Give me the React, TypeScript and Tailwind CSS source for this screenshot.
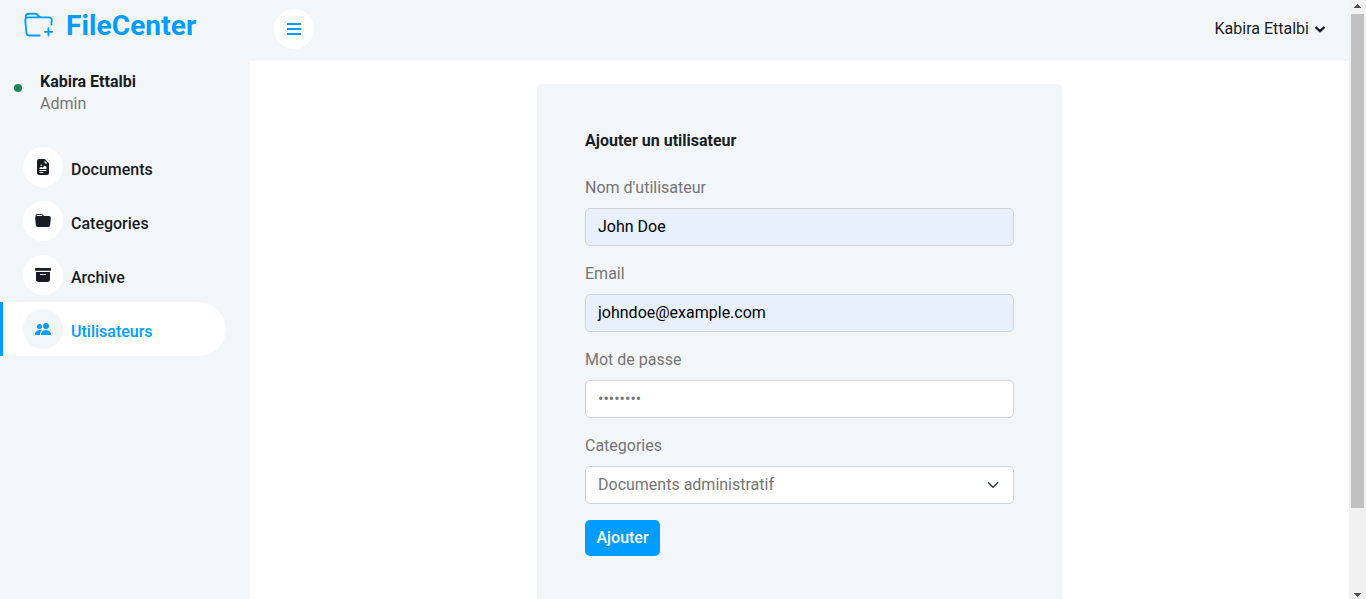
import type { ReactNode } from 'react';
import { BsArchiveFill, BsFileEarmarkRichtextFill, BsFolderFill, BsFolderPlus } from 'react-icons/bs';

function PeopleIcon() {
  return (
    <svg className="size-4" viewBox="0 0 16 16" fill="currentColor">
      <path d="M7 14s-1 0-1-1 1-4 5-4 5 3 5 4-1 1-1 1H7zm4-6a3 3 0 1 0 0-6 3 3 0 0 0 0 6z" />
      <path d="M5.216 14A2.238 2.238 0 0 1 5 13c0-1.355.68-2.75 1.936-3.720A6.325 6.325 0 0 0 5 9c-4 0-5 3-5 4s1 1 1 1h4.216z" />
      <path d="M4.500 8a2.500 2.500 0 1 0 0-5 2.500 2.500 0 0 0 0 5z" />
    </svg>
  );
}

function NavItem({ icon, label, active }: { icon: ReactNode; label: string; active?: boolean }) {
  return (
    <a
      href="#"
      className={
        active
          ? 'flex h-[54px] w-[226px] items-center rounded-r-full border-l-3 border-[#009cff] bg-white pl-5 text-[#009cff]'
          : 'flex h-[54px] w-[226px] items-center border-l-3 border-[#f3f6f9] pl-5 text-[#191c24]'
      }
    >
      <span
        className={
          active
            ? 'flex size-10 items-center justify-center rounded-full bg-[#f3f6f9]'
            : 'flex size-10 items-center justify-center rounded-full bg-white'
        }
      >
        {icon}
      </span>
      <span className="ml-2 pt-1.5 text-base font-medium">{label}</span>
    </a>
  );
}

function Field({ label, children }: { label: string; children: ReactNode }) {
  return (
    <div className="mb-4">
      <label className="mb-2 block leading-6">{label}</label>
      {children}
    </div>
  );
}

function Scrollbar() {
  return (
    <div className="flex w-[17px] shrink-0 flex-col items-center bg-[#f1f1f1]">
      <svg className="h-[14px] w-[17px]" viewBox="0 0 17 14" fill="#505050" shapeRendering="crispEdges">
        <path d="M8 4h1v1h1v1h1v1h1v1H5V7h1V6h1V5h1z" />
      </svg>
      <div className="h-[494px] w-[13px] bg-[#c1c1c1]" />
      <svg className="mt-auto h-[14px] w-[17px]" viewBox="0 0 17 14" fill="#505050" shapeRendering="crispEdges">
        <path d="M5 8h7v1h-1v1h-1v1H9v1H8v-1H7v-1H6V9H5z" />
      </svg>
    </div>
  );
}

export default function App() {
  return (
    <div className="flex h-[599px] w-[1366px] overflow-hidden bg-white font-[Roboto,sans-serif] text-base leading-6 text-[#757575]">
      <aside className="w-[250px] shrink-0 bg-[#f3f6f9]">
        <div className="flex h-[50px] items-center pl-6 text-[#009cff]">
          <BsFolderPlus className="size-[29px]" />
          <span className="ml-[13px] pt-0.5 text-[28px] leading-[34px] font-bold tracking-[0.1px]">FileCenter</span>
        </div>
        <div className="mt-5 flex h-[54px] pl-3">
          <span className="mt-3 size-3 shrink-0 rounded-full border-2 border-white bg-[#198754]" />
          <div className="ml-4">
            <div className="leading-[23px] font-bold text-[#191c24]">Kabira Ettalbi</div>
            <div className="leading-[21px]">Admin</div>
          </div>
        </div>
        <nav className="mt-4">
          <NavItem icon={<BsFileEarmarkRichtextFill />} label="Documents" />
          <NavItem icon={<BsFolderFill />} label="Categories" />
          <NavItem icon={<BsArchiveFill />} label="Archive" />
          <NavItem icon={<PeopleIcon />} label="Utilisateurs" active />
        </nav>
      </aside>

      <div className="flex min-w-0 flex-1 flex-col">
        <header className="flex h-[61px] shrink-0 items-center justify-between bg-[#f3f6f9] pr-[23px] pb-[3px] pl-6">
          <button className="flex size-10 items-center justify-center rounded-full bg-white">
            <svg className="size-4" viewBox="0 0 16 16" fill="#009cff">
              <path d="M1 2h14v2H1zM1 7h14v2H1zM1 12h14v2H1z" />
            </svg>
          </button>
          <div className="flex items-center text-[#191c24]">
            <span>Kabira Ettalbi</span>
            <svg className="ml-[5px] h-3 w-3" viewBox="0 0 12 12" fill="none" stroke="#191c24" strokeWidth="2.3">
              <path d="M1.500 4 6 8.200 10.500 4" />
            </svg>
          </div>
        </header>

        <main className="flex justify-center pt-[23px]">
          <form className="h-[560px] w-[525px] rounded-[5px] bg-[#f3f6f9] px-12 pt-[47px]">
            <h6 className="mb-[26px] leading-[19px] font-bold text-[#191c24]">Ajouter un utilisateur</h6>
            <Field label="Nom d'utilisateur">
              <div className="h-[38px] rounded-[5px] border border-[#ced4da] bg-[#e8f0fe] px-3 py-1.5 text-black">
                John Doe
              </div>
            </Field>
            <Field label="Email">
              <div className="h-[38px] rounded-[5px] border border-[#ced4da] bg-[#e8f0fe] px-3 py-1.5 text-black">
                johndoe@example.com
              </div>
            </Field>
            <Field label="Mot de passe">
              <div className="h-[38px] rounded-[5px] border border-[#ced4da] bg-white px-3 py-1.5">••••••••</div>
            </Field>
            <Field label="Categories">
              <div className="flex h-[38px] items-center justify-between rounded-[5px] border border-[#ced4da] bg-white px-3">
                <span>Documents administratif</span>
                <svg className="mr-0.5 h-3 w-3" viewBox="0 0 16 16" fill="none" stroke="#343a40" strokeWidth="2" strokeLinecap="round" strokeLinejoin="round">
                  <path d="m2 5 6 6 6-6" />
                </svg>
              </div>
            </Field>
            <button className="h-9 w-[75px] rounded-[5px] bg-[#009cff] text-center font-medium text-white">Ajouter</button>
          </form>
        </main>
      </div>
      <Scrollbar />
    </div>
  );
}
